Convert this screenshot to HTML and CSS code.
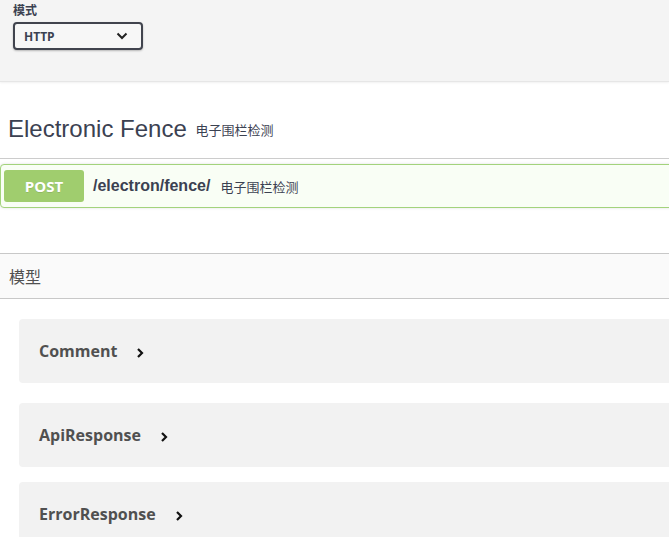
FILE: index.html
```html
<!DOCTYPE html>
<html lang="zh-CN">
<head>
  <meta charset="UTF-8" />
  <meta name="viewport" content="width=device-width, initial-scale=1" />
  <title>Swagger UI</title>
  <link rel="stylesheet" href="styles.css">
</head>
<body>

  <!-- Schemes -->
  <div class="scheme-bar">
    <div class="scheme-label">模式</div>
    <div class="scheme-select">
      <span>HTTP</span>
      <svg width="12" height="8" viewBox="0 0 12 8"><path d="M1.5 1.5 L6 6 L10.5 1.5" fill="none" stroke="#222" stroke-width="2"/></svg>
    </div>
  </div>

  <!-- Tag section -->
  <div class="tag">
    <h3 class="tag-title">Electronic Fence <small>电子围栏检测</small></h3>
  </div>

  <div class="opblock">
    <span class="method">POST</span>
    <span class="path">/electron/fence/</span>
    <span class="summary">电子围栏检测</span>
  </div>

  <!-- Models -->
  <section class="models">
    <h4 class="models-title">模型</h4>
    <div class="model-list">
      <div class="model">Comment <svg class="arrow" width="10" height="12" viewBox="0 0 10 12"><path d="M3 2 L7 6 L3 10" fill="none" stroke="#111" stroke-width="2.2"/></svg></div>
      <div class="model">ApiResponse <svg class="arrow" width="10" height="12" viewBox="0 0 10 12"><path d="M3 2 L7 6 L3 10" fill="none" stroke="#111" stroke-width="2.2"/></svg></div>
      <div class="model">ErrorResponse <svg class="arrow" width="10" height="12" viewBox="0 0 10 12"><path d="M3 2 L7 6 L3 10" fill="none" stroke="#111" stroke-width="2.2"/></svg></div>
    </div>
  </section>

</body>
</html>
```
FILE: styles.css
```css
* {
  box-sizing: border-box;
}

body {
  margin: 0;
  font-family: "Open Sans", "Noto Sans CJK SC", sans-serif;
  color: #3b4151;
  background: #fff;
  overflow-x: hidden;
}

.scheme-bar {
  background: #f4f4f4;
  padding: 3px 13px 31px;
  border-bottom: 1px solid #e6e6e6;
  box-shadow: 0 1px 2px rgba(0,0,0,0.06);
}

.scheme-label {
  font-size: 12px;
  line-height: 16px;
  font-weight: 700;
  font-family: "Liberation Sans", "Noto Sans CJK SC", sans-serif;
}

.scheme-select {
  margin-top: 3px;
  width: 130px;
  height: 28px;
  border: 2px solid #41444e;
  border-radius: 4px;
  background: #f7f7f7;
  box-shadow: 0 1px 2px rgba(0,0,0,0.25);
  display: flex;
  align-items: center;
  justify-content: space-between;
  padding: 0 13px 0 9px;
  font-size: 12px;
  font-weight: 700;
  font-family: "Open Sans", sans-serif;
}

.tag {
  margin-top: 32px;
  padding: 0 8px 12px;
  border-bottom: 1px solid #cccccc;
}

.tag-title {
  margin: 0;
  font-family: "Liberation Sans", "Noto Sans CJK SC", sans-serif;
  font-size: 24px;
  line-height: 30px;
  font-weight: 400;
}

.tag-title small {
  font-size: 13px;
  margin-left: 2px;
  vertical-align: 2px;
}

.opblock {
  margin: 5px -10px 0 0;
  border: 1px solid #a3d37c;
  border-radius: 4px;
  background: #f9fef5;
  padding: 5px 3px;
  display: flex;
  align-items: center;
  box-shadow: 0 0 3px rgba(0,0,0,0.12);
}

.method {
  width: 80px;
  height: 32px;
  line-height: 32px;
  background: #a0cd6e;
  color: #fff;
  border-radius: 3px;
  text-align: center;
  font-size: 15px;
  font-weight: 700;
  text-shadow: 0 1px 0 rgba(0,0,0,0.1);
}

.path {
  margin-left: 9px;
  font-family: "Liberation Sans", sans-serif;
  font-size: 16px;
  font-weight: 700;
}

.summary {
  margin-left: 10px;
  font-size: 13px;
  font-family: "Noto Sans CJK SC", sans-serif;
}

.models {
  margin-top: 45px;
}

.models-title {
  margin: 0;
  height: 46px;
  display: flex;
  align-items: center;
  padding: 0 9px;
  background: #fafafa;
  border-top: 1px solid #c8c8c8;
  border-bottom: 1px solid #c8c8c8;
  font-size: 16px;
  font-weight: 400;
  color: #505050;
  font-family: "Noto Sans CJK SC", sans-serif;
}

.model-list {
  padding: 20px 0 0 19px;
}

.model {
  margin-right: -10px;
  margin-bottom: 20px;
  height: 64px;
  background: #f2f2f2;
  border-radius: 4px;
  padding: 0 20px;
  display: flex;
  align-items: center;
  font-size: 16px;
  font-weight: 700;
  color: #505050;
}

.model:nth-child(2) {
  margin-bottom: 15px;
}

.arrow {
  margin-left: 18px;
  margin-top: 3px;
}
```
